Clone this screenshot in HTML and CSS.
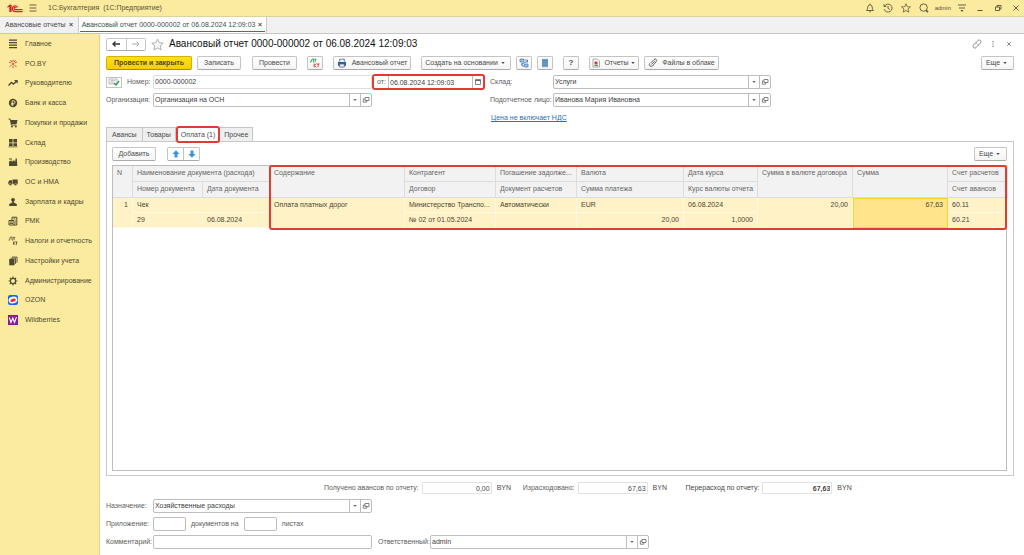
FILE: index.html
```html
<!DOCTYPE html>
<html lang="ru">
<head>
<meta charset="utf-8">
<title>Авансовый отчет 0000-000002 от 06.08.2024 12:09:03</title>
<link rel="stylesheet" href="styles.css">
</head>
<body>
<svg class="defs" aria-hidden="true">
  <symbol id="i-open" viewBox="0 0 8 8"><path d="M3 1.5h4v3H3zM3 3H1.3v3.2h3.4V4.5" fill="none" stroke="currentColor" stroke-width=".8"/></symbol>
  <symbol id="i-down" viewBox="0 0 8 8"><path d="M2.300 3h3.400L4 5z" fill="currentColor"/></symbol>
  <symbol id="i-star" viewBox="0 0 12 12"><path d="M6 .9l1.5 3.5 3.8.3-2.9 2.5.9 3.8L6 9l-3.3 2 .9-3.8L.7 4.7l3.8-.3z" fill="none" stroke="currentColor" stroke-width=".9"/></symbol>
</svg>

<header class="titlebar">
  <svg class="logo" viewBox="0 0 16 9"><g fill="none" stroke="#d8232a" stroke-width="1.2"><path d="M.5 3.2L2.9 1.2V8M4 1v7"/><path d="M10.800 3.300A2.900 2.900 0 1 0 8.300 7.600H15.500"/><path d="M9.400 3.700A1.300 1.300 0 1 0 8.300 5.700H15.500"/></g></svg>
  <button class="plain" aria-label="Меню"><svg class="ic10" viewBox="0 0 10 10"><path d="M1.500 2h7M1.500 5h7M1.500 8h7" stroke="currentColor" stroke-width=".9"/></svg></button>
  <span class="apptitle">1С:Бухгалтерия&nbsp; (1С:Предприятие)</span>
  <div class="tools">
    <button class="plain" aria-label="Уведомления"><svg class="ic10" viewBox="0 0 10 10"><path d="M1.500 7.500C3 6.500 2.500 4 3.200 2.800 3.800 1.500 6.200 1.500 6.800 2.800 7.500 4 7 6.500 8.500 7.500zM4.200 8.800h1.600M5 .6v1" fill="none" stroke="currentColor" stroke-width=".9"/></svg></button>
    <button class="plain" aria-label="История"><svg class="ic10" viewBox="0 0 10 10"><path d="M1.500 3.200A4 4 0 1 1 1.200 6.200M1 1.200v2.300h2.300M5 2.800v2.500l1.800 1.200" fill="none" stroke="currentColor" stroke-width=".9"/></svg></button>
    <button class="plain" aria-label="Избранное"><svg class="ic10"><use href="#i-star"/></svg></button>
    <button class="plain" aria-label="Поиск"><svg class="ic10" viewBox="0 0 10 10"><circle cx="4.600" cy="4.600" r="3.700" fill="none" stroke="currentColor" stroke-width=".9"/><path d="M7 7l2 2.200" stroke="currentColor" stroke-width="1.500"/></svg></button>
    <span class="user">admin</span>
    <button class="plain" aria-label="Настройки"><svg class="ic10" viewBox="0 0 10 10"><path d="M1 2h8M2 5h6" stroke="currentColor" stroke-width=".9"/><path d="M3.500 7h3L5 9z" fill="currentColor"/></svg></button>
    <button class="plain" aria-label="Свернуть"><svg class="ic10" viewBox="0 0 10 10"><path d="M2.500 7.500h5" stroke="currentColor"/></svg></button>
    <button class="plain" aria-label="Развернуть"><svg class="ic10" viewBox="0 0 10 10"><path d="M2.500 4h4v3.500h-4zM4 4V2.500h4V6H6.500" fill="none" stroke="currentColor" stroke-width=".9"/></svg></button>
    <button class="plain" aria-label="Закрыть"><svg class="ic10" viewBox="0 0 10 10"><path d="M2.500 2.500l5 5M7.500 2.500l-5 5" stroke="currentColor" stroke-width=".9"/></svg></button>
  </div>
</header>

<nav class="windows">
  <div class="wtab"><a href="#list">Авансовые отчеты</a><button class="x" aria-label="Закрыть вкладку">×</button></div>
  <div class="wtab current"><a href="#doc">Авансовый отчет 0000-000002 от 06.08.2024 12:09:03</a><button class="x" aria-label="Закрыть вкладку">×</button></div>
</nav>

<div class="workspace">
  <nav class="sidebar">
    <ul>
      <li><a href="#"><svg viewBox="0 0 10 10"><path d="M1 1.200h8M1 3.700h8M1 6.200h8M1 8.700h8" stroke="currentColor" stroke-width="1.300"/></svg>Главное</a></li>
      <li><a href="#"><svg viewBox="0 0 10 10"><path d="M5 .8v2.400M5 6.800v2.400M1 3l2.400 1M6.600 4L9 3M1.500 7.800L3.500 6M6.500 6l2 2M2.500 1l1.400 2M7.500 1L6.100 3" stroke="#e0452c" stroke-width=".9"/><circle cx="5" cy="5" r="1" fill="#e0452c"/></svg>PO.BY</a></li>
      <li><a href="#"><svg viewBox="0 0 10 10"><path d="M.5 7.500L3.500 4.500 5.500 6 8.700 3" fill="none" stroke="currentColor" stroke-width="1.400"/><path d="M6 2h3.700v3.700z" fill="currentColor"/></svg>Руководителю</a></li>
      <li><a href="#"><svg viewBox="0 0 10 10"><circle cx="5" cy="5" r="4.200" fill="currentColor"/><path d="M4.200 8V2.800h1.500a1.300 1.300 0 0 1 0 2.700H3.200M3.200 6.700h2.500" fill="none" stroke="#fbeb9e" stroke-width=".9"/></svg>Банк и касса</a></li>
      <li><a href="#"><svg viewBox="0 0 10 10"><path d="M.5 1h1.700l1.200 6h5.100" fill="none" stroke="currentColor" stroke-width=".9"/><path d="M2.300 2h7.200l-.9 4H3.200z" fill="currentColor"/><circle cx="4" cy="8.500" r="1" fill="currentColor"/><circle cx="7.800" cy="8.500" r="1" fill="currentColor"/></svg>Покупки и продажи</a></li>
      <li><a href="#"><svg viewBox="0 0 10 10"><path d="M1 1h3.600v3.400H1zM5.400 1H9v3.400H5.400zM1 5.200h3.600V8H1zM5.400 5.200H9V8H5.400zM.5 8.500h9v.8h-9z" fill="currentColor"/></svg>Склад</a></li>
      <li><a href="#"><svg viewBox="0 0 10 10"><path d="M1 9V4.500l2.700-1.300v1.500L6.500 3v1.500h.8l.3-3h1.200L9.300 9zM1 1.500h3v1H1z" fill="currentColor"/></svg>Производство</a></li>
      <li><a href="#"><svg viewBox="0 0 10 10"><path d="M4.500 2.500h5.200v4.700H4.500zM.3 7.200V5l1.200-1.800H4v4z" fill="currentColor"/><g fill="currentColor" stroke="#fbeb9e" stroke-width=".4"><circle cx="2.300" cy="7.400" r="1.200"/><circle cx="7.500" cy="7.400" r="1.200"/></g></svg>ОС и НМА</a></li>
      <li><a href="#"><svg viewBox="0 0 10 10"><circle cx="5" cy="2.800" r="1.900" fill="currentColor"/><path d="M4.200 4h1.600v1.600l3 1.400v2H1.200V7l3-1.400z" fill="currentColor"/></svg>Зарплата и кадры</a></li>
      <li><a href="#"><svg viewBox="0 0 10 10"><path d="M1 4.500h5V9H1zM4 4.500V1.200h4.800V9H6" fill="none" stroke="currentColor"/><path d="M2 6h3M2 7.500h3M5.500 2.800h2M7 5h1M7 7h1" stroke="currentColor" stroke-width=".9"/></svg>РМК</a></li>
      <li><a href="#"><svg viewBox="0 0 10 10"><path d="M1 4.500V3.800h.6L2.300 1.200H4v2.600h.5v.7M4.800 1.400h2.400M6 1.400v2.800M5.500 5.500v3.300M7.300 5.500L5.700 7l1.600 1.800M7.500 6h2M8.500 6v2.800" fill="none" stroke="currentColor" stroke-width=".8"/></svg>Налоги и отчетность</a></li>
      <li><a href="#"><svg viewBox="0 0 10 10"><path d="M1.200 3h5.300v6.300H1.200z" fill="currentColor"/><path d="M2.500 2.200h5v5.600M4 1.100h5v5.600" fill="none" stroke="currentColor" stroke-width=".9"/></svg>Настройки учета</a></li>
      <li><a href="#"><svg viewBox="0 0 10 10"><circle cx="5" cy="5" r="2.600" fill="none" stroke="currentColor" stroke-width="1.200"/><path d="M5 .6v1.600M5 7.800v1.600M.6 5h1.600M7.800 5h1.600M1.900 1.900L3 3M7 7l1.100 1.100M8.100 1.900L7 3M3 7L1.900 8.100" stroke="currentColor" stroke-width="1.200"/></svg>Администрирование</a></li>
      <li><a href="#"><svg viewBox="0 0 10 10"><rect width="10" height="10" rx="2" fill="#1268f3"/><ellipse cx="5" cy="5" rx="4.400" ry="3.400" fill="#fff" transform="rotate(-15 5 5)"/><ellipse cx="5" cy="5.200" rx="2.900" ry="1.600" fill="#ee2c3c" transform="rotate(-15 5 5)"/></svg>OZON</a></li>
      <li><a href="#"><svg viewBox="0 0 10 10"><rect width="10" height="10" fill="#8d1a94"/><path d="M1.300 2.500L3 7.500 4.800 3l1.700 4.500L8.500 2" fill="none" stroke="#fff" stroke-width="1.100"/></svg>Wildberries</a></li>
    </ul>
  </nav>

  <main class="doc">
    <div class="heading">
      <div class="group nav">
        <button aria-label="Назад"><svg class="ic10" viewBox="0 0 10 10"><path d="M9 5H2.500M4.500 2.500L2 5l2.500 2.500" fill="none" stroke="#333" stroke-width="1.300"/></svg></button>
        <button aria-label="Вперед"><svg class="ic10" viewBox="0 0 10 10"><path d="M1 5h6.500M5.500 2.500L8 5 5.500 7.500" fill="none" stroke="#aaa"/></svg></button>
      </div>
      <button class="plain fav" aria-label="В избранное"><svg><use href="#i-star"/></svg></button>
      <h1>Авансовый отчет 0000-000002 от 06.08.2024 12:09:03</h1>
      <div class="head-tools">
        <button class="plain" aria-label="Ссылка"><svg class="ic10" viewBox="0 0 10 10"><path d="M4 3.500l1.800-2a1.800 1.800 0 0 1 2.700 2.500L6.700 6H5M6 6.500L4.200 8.500A1.800 1.800 0 0 1 1.500 6L3.300 4H5" fill="none" stroke="currentColor" stroke-width=".8"/></svg></button>
        <button class="plain" aria-label="Действия"><svg class="ic10" viewBox="0 0 10 10"><path d="M4.400 2h1.200v1.200H4.400zM4.400 4.400h1.200v1.200H4.400zM4.400 6.800h1.200V8H4.400z" fill="currentColor"/></svg></button>
        <button class="plain" aria-label="Закрыть"><svg class="ic10" viewBox="0 0 10 10"><path d="M3.200 3.200l3.600 3.600M6.800 3.200L3.200 6.800" stroke="currentColor" stroke-width=".9"/></svg></button>
      </div>
    </div>

    <div class="toolbar">
      <button class="btn primary w86">Провести и закрыть</button>
      <button class="btn w44">Записать</button>
      <button class="btn w45">Провести</button>
      <button class="btn sq" aria-label="Дт Кт"><svg class="ic10" viewBox="0 0 10 10"><path d="M.5 4.500v-.8h.7L2 1h1.400v2.700h.6v.8M4.200 1.200h2.200M5.300 1.200v2.600" fill="none" stroke="#1f9b55" stroke-width=".9"/><path d="M4.200 5.500v3.800M6.200 5.500L4.500 7.300l1.700 2M6.800 6h2.700M8.200 6v3.300" fill="none" stroke="#e0342b" stroke-width=".9"/></svg></button>
      <button class="btn w78"><svg class="ic10" viewBox="0 0 10 10"><path d="M1 3.800h8v4H1z" fill="#35608f"/><path d="M2.700 3.500V1.200h4.600v2.300M2.700 6h4.600v3H2.700z" fill="#fff" stroke="#35608f" stroke-width=".8"/></svg>Авансовый отчет</button>
      <button class="btn w90">Создать на основании<svg class="caret"><use href="#i-down"/></svg></button>
      <button class="btn sq tight" aria-label="Структура подчиненности"><svg class="ic10" viewBox="0 0 10 10"><path d="M1 1h4v3H1zM5.500 6H9v3H5.500z" fill="#9fc0e0" stroke="#4679ac" stroke-width=".7"/><path d="M6 2h2.500v2.500M3 5v3h2M2 6.500l6-3" fill="none" stroke="#4679ac" stroke-width=".9"/></svg></button>
      <button class="btn sq" aria-label="Реестр"><svg class="ic10" viewBox="0 0 10 10"><path d="M2 .8h6v8.400H2z" fill="#7fa8d0"/><path d="M2 2.700h6M2 4.900h6M2 7.100h6" stroke="#35679b" stroke-width=".7"/></svg></button>
      <button class="btn sq help" aria-label="Справка">?</button>
      <button class="btn w49"><svg class="ic10" viewBox="0 0 10 10"><path d="M2 1h4.500L8.500 3v6H2z" fill="#fff" stroke="#888" stroke-width=".7"/><path d="M3.500 3.500h3v3h-3z" fill="#d83a3a"/><path d="M3.500 7.500h3.500" stroke="#488a48"/></svg>Отчеты<svg class="caret"><use href="#i-down"/></svg></button>
      <button class="btn w75"><svg class="ic10" viewBox="0 0 10 10"><path d="M3.500 6.500L7 2.800M2.500 5.200L6 1.500a1.500 1.500 0 0 1 2.300 2L4.500 8A2 2 0 0 1 1.500 5.500" fill="none" stroke="#666"/></svg>Файлы в облаке</button>
      <button class="btn more">Еще<svg class="caret"><use href="#i-down"/></svg></button>
    </div>

    <form class="fields">
      <div class="number"><span class="state"><svg viewBox="0 0 14 8"><path d="M2 1h8v5H2z" fill="#fff" stroke="#999" stroke-width=".7"/><path d="M3.500 2.700h5M3.500 4.300h3" stroke="#999" stroke-width=".7"/><path d="M7 5l2 2 3-4" fill="none" stroke="#2ca05a" stroke-width="1.400"/></svg></span><label for="num">Номер:</label></div>
      <div class="box light"><input id="num" value="0000-000002"></div>
      <div class="datebox marked"><label for="date">от:</label><input id="date" value="06.08.2024 12:09:03"><button type="button" aria-label="Календарь"><svg class="ic8" viewBox="0 0 8 8"><path d="M1.500 2h5v4.500h-5z" fill="none" stroke="currentColor" stroke-width=".8"/><path d="M1.200 1.300h5.600v1.700H1.200z" fill="currentColor"/></svg></button></div>
      <label class="gap" for="store">Склад:</label>
      <div class="box"><input id="store" value="Услуги"><button type="button" aria-label="Выбрать"><svg class="ic8"><use href="#i-down"/></svg></button><button type="button" aria-label="Открыть"><svg class="ic8"><use href="#i-open"/></svg></button></div>
      <label class="first" for="org">Организация:</label>
      <div class="box"><input id="org" value="Организация на ОСН"><button type="button" aria-label="Выбрать"><svg class="ic8"><use href="#i-down"/></svg></button><button type="button" aria-label="Открыть"><svg class="ic8"><use href="#i-open"/></svg></button></div>
      <label class="gap person" for="person">Подотчетное лицо:</label>
      <div class="box"><input id="person" value="Иванова Мария Ивановна"><button type="button" aria-label="Выбрать"><svg class="ic8"><use href="#i-down"/></svg></button><button type="button" aria-label="Открыть"><svg class="ic8"><use href="#i-open"/></svg></button></div>
      <a class="vat" href="#vat">Цена не включает НДС</a>
    </form>

    <div class="tabs" role="tablist">
      <button role="tab">Авансы</button>
      <button role="tab">Товары</button>
      <button role="tab" class="active" aria-selected="true">Оплата (1)</button>
      <button role="tab">Прочее</button>
    </div>

    <section class="panel">
      <div class="panelbar">
        <button class="btn w44">Добавить</button>
        <div class="group move">
          <button aria-label="Вверх"><svg class="ic10" viewBox="0 0 10 10"><path d="M5 1.200L8.600 5H6.500v3.500h-3V5H1.400z" fill="#3b93dc"/></svg></button>
          <button aria-label="Вниз"><svg class="ic10" viewBox="0 0 10 10"><path d="M5 8.800L1.400 5h2.100V1.500h3V5h2.100z" fill="#3b93dc"/></svg></button>
        </div>
        <button class="btn more">Еще<svg class="caret"><use href="#i-down"/></svg></button>
      </div>
      <div class="gridbox">
        <table>
          <colgroup><col class="c20"><col class="c70"><col class="c67"><col class="c135"><col class="c91"><col class="c81"><col class="c107"><col class="c74"><col class="c95"><col class="c95"><col class="c60"></colgroup>
          <thead>
            <tr><th rowspan="2">N</th><th colspan="2">Наименование документа (расхода)</th><th rowspan="2">Содержание</th><th>Контрагент</th><th>Погашение задолже...</th><th>Валюта</th><th>Дата курса</th><th rowspan="2">Сумма в валюте договора</th><th rowspan="2">Сумма</th><th>Счет расчетов</th></tr>
            <tr><th>Номер документа</th><th>Дата документа</th><th>Договор</th><th>Документ расчетов</th><th>Сумма платежа</th><th>Курс валюты отчета</th><th>Счет авансов</th></tr>
          </thead>
          <tbody>
            <tr><td rowspan="2" class="num">1</td><td colspan="2">Чек</td><td rowspan="2">Оплата платных дорог</td><td>Министерство Транспо...</td><td>Автоматически</td><td>EUR</td><td>06.08.2024</td><td rowspan="2" class="num">20,00</td><td rowspan="2" class="num selected">67,63</td><td>60.11</td></tr>
            <tr><td>29</td><td>06.08.2024</td><td>№ 02 от 01.05.2024</td><td></td><td class="num">20,00</td><td class="num">1,0000</td><td>60.21</td></tr>
          </tbody>
        </table>
        <div class="frame"></div>
      </div>
    </section>

    <div class="totals">
      <label for="t1">Получено авансов по отчету:</label><input id="t1" value="0,00" readonly><span>BYN</span>
      <label for="t2">Израсходовано:</label><input id="t2" value="67,63" readonly><span>BYN</span>
      <label for="t3" class="dark">Перерасход по отчету:</label><input id="t3" class="strong" value="67,63" readonly><span>BYN</span>
    </div>

    <form class="footer">
      <label for="purpose">Назначение:</label>
      <div class="box"><input id="purpose" value="Хозяйственные расходы"><button type="button" aria-label="Выбрать"><svg class="ic8"><use href="#i-down"/></svg></button><button type="button" aria-label="Открыть"><svg class="ic8"><use href="#i-open"/></svg></button></div>
      <label class="first" for="docs">Приложение:</label>
      <div class="attach"><div class="box small"><input id="docs"></div><label for="docs">документов на</label><div class="box small"><input id="sheets"></div><label for="sheets">листах</label></div>
      <label class="first" for="comment">Комментарий:</label>
      <div class="box"><input id="comment"></div>
      <label class="resp" for="resp">Ответственный:</label>
      <div class="box"><input id="resp" value="admin"><button type="button" aria-label="Выбрать"><svg class="ic8"><use href="#i-down"/></svg></button><button type="button" aria-label="Открыть"><svg class="ic8"><use href="#i-open"/></svg></button></div>
    </form>
  </main>
</div>
</body>
</html>
```

FILE: styles.css
```css
* { box-sizing: border-box; }
body {
  margin: 0;
  min-height: 100vh;
  display: flex;
  flex-direction: column;
  background: #fff;
  color: #4a4a4a;
  font: 7px/10px "Liberation Sans", Arial, sans-serif;
}
button, input { font: inherit; color: inherit; margin: 0; padding: 0; }
a { color: inherit; text-decoration: none; }
svg { display: block; flex: none; }
label { white-space: nowrap; color: #5c5c5c; }
.defs { width: 0; height: 0; position: absolute; }
.ic10 { width: 10px; height: 10px; }
.ic8 { width: 8px; height: 8px; }
.plain { border: 0; background: none; }

.titlebar {
  height: 17px;
  display: flex;
  align-items: center;
  padding: 0 3px 0 7px;
  background: #fbeb9e;
  border-bottom: 1px solid #ddd29b;
  color: #5a5238;
}
.logo { width: 16px; height: 9px; margin-right: 5px; }
.apptitle { margin-left: 10px; }
.tools { margin-left: auto; display: flex; align-items: center; gap: 8px; }
.user { font-size: 6px; margin: 0 -2px; }

.windows { height: 17px; display: flex; background: #f1f1f1; border-bottom: 1px solid #c6c6c6; }
.wtab { display: flex; align-items: center; gap: 3px; padding: 0 4px 0 5px; border-right: 1px solid #ccc; white-space: nowrap; }
.wtab.current { gap: 2px; padding: 0 3px; background: linear-gradient(#009a4e, #009a4e) center bottom 1px / calc(100% - 2px) 1px no-repeat #fff; }
.x { border: 0; background: none; font-weight: bold; width: 5px; line-height: 10px; }

.workspace { flex: 1; display: flex; }
.sidebar { width: 100px; flex: none; background: #fbeb9e; border-right: 1px solid #ddd29b; color: #4f482f; }
.sidebar ul { list-style: none; margin: 0; padding: 0; height: 296px; display: grid; grid-auto-rows: 1fr; }
.sidebar a { height: 100%; display: flex; align-items: center; gap: 7px; padding-left: 8px; white-space: nowrap; }
.sidebar svg { width: 10px; height: 10px; }

.doc { flex: 1; min-width: 0; display: flex; flex-direction: column; padding: 3px 10px 6px 6px; }
.heading { display: flex; align-items: center; height: 14px; margin-bottom: 5px; }
.heading h1 { margin: 0 0 0 5px; font-size: 10px; line-height: 14px; font-weight: normal; color: #111; }
.fav { margin-left: 5px; color: #aaa; }
.fav svg { width: 13px; height: 13px; }
.head-tools { margin-left: auto; display: flex; gap: 6px; color: #777; }
.group { display: flex; border: 1px solid #c4c4c4; border-bottom-color: #aaa; border-radius: 2px; }
.group button { border: 0; background: #fff; flex: 1; display: flex; align-items: center; justify-content: center; }
.group button + button { border-left: 1px solid #c4c4c4; }
.nav { width: 40px; height: 13px; }

.btn {
  height: 14px;
  display: flex;
  align-items: center;
  justify-content: center;
  border: 1px solid #c4c4c4;
  border-bottom: 1px solid #aaa;
  border-radius: 2px;
  background: linear-gradient(#fff, #f4f4f4);
  white-space: nowrap;
}
.btn .ic10 { margin-right: 5px; }
.caret { width: 8px; height: 8px; margin-left: 1px; }
.toolbar { display: flex; height: 14px; margin-bottom: 5px; }
.toolbar .btn { margin-right: 5px; }
.toolbar .btn.w45, .toolbar .btn.w78, .toolbar .btn.sq { margin-right: 10px; }
.toolbar .btn.w44 { margin-right: 11px; }
.toolbar .btn.tight { margin-right: 5px; }
.btn.primary { background: linear-gradient(#ffe01a, #f5cf00); border-color: #d3b200 #d3b200 #a98f00; font-weight: bold; color: #55470a; }
.w86 { width: 86px; }
.w44 { width: 44px; }
.w45 { width: 45px; }
.w78 { width: 78px; }
.w90 { width: 90px; }
.w49 { width: 50px; }
.w49 .ic10 { margin-right: 3px; }
.w49 .caret { margin-left: 0; }
.w75 { width: 75px; }
.w75 .ic10 { margin-right: 4px; }
.sq { width: 16px; }
.sq .ic10 { margin: 0; }
.help { font-weight: bold; font-size: 8px; }
.more { width: 33px; margin-left: auto; }
.toolbar .btn.more { margin-left: auto; margin-right: 0; }

.fields { display: grid; grid-template-columns: 47px 219fr 113px 68px 218fr 243fr; grid-auto-rows: 14px; row-gap: 4px; align-items: center; }
.number { display: flex; align-items: center; gap: 5px; }
.state { width: 16px; height: 11px; border: 1px solid #c4c4c4; display: flex; align-items: center; }
.state svg { width: 14px; height: 8px; }
.gap { padding-left: 5px; }
.first { grid-column: 1; }
.person { grid-column: 4; }
.vat { grid-column: 4 / span 2; padding-left: 6px; color: #2f6fb5; text-decoration: underline; }

.box { height: 14px; display: flex; min-width: 0; border: 1px solid #bdbdbd; border-radius: 2px; background: #fff; }
.box.light { border-color: #ddd; }
.box input, .datebox input { flex: 1; min-width: 0; width: 0; border: 0; background: none; padding: 0 1px; outline: 0; color: #404040; }
.box button, .datebox button { width: 11px; border: 0; border-left: 1px solid #bdbdbd; background: none; display: flex; align-items: center; justify-content: center; color: #666; }
.datebox { height: 16px; margin: -1px 0; display: flex; align-items: center; }
.datebox label { width: 14px; padding-left: 3px; }
.datebox input, .datebox button { height: 12px; }
.datebox input { border-left: 1px solid #bdbdbd; }
.marked { border: 2px solid #e23b33; border-radius: 3px; }

.tabs { display: flex; height: 15px; padding-top: 1px; margin-top: 1px; }
.tabs button { border: 1px solid #c6c6c6; border-left-width: 0; border-bottom: 0; background: #efefef; padding: 0 4px; height: 14px; }
.tabs button:first-child { border-left-width: 1px; padding: 0 5px; }
.tabs .active { position: relative; z-index: 1; background: #fff; border: 2px solid #e23b33; border-radius: 3px; height: 17px; margin-top: -1px; padding: 0 3px; }

.panel { flex: 1; display: flex; flex-direction: column; border: 1px solid #c9c9c9; padding: 5px 6px 4px 5px; }
.panelbar { display: flex; height: 14px; margin-bottom: 4px; }
.move { width: 33px; margin-left: 11px; }
.gridbox { flex: 1; position: relative; border: 1px solid #bdbdbd; }
.frame { position: absolute; left: calc(100% * 156 / 893); right: -1px; top: -1px; height: 65px; border: 2px solid #e23b33; border-radius: 3px; }
table { width: 100%; table-layout: fixed; border-collapse: separate; border-spacing: 0; }
th, td { text-align: left; vertical-align: top; font-weight: normal; white-space: nowrap; overflow: hidden; text-overflow: ellipsis; line-height: 10px; }
th { height: 16px; padding: 2px 1px 3px 4px; background: #f2f2f2; color: #666; border-right: 1px solid #dcdcdc; border-bottom: 1px solid #dcdcdc; }
td { height: 15px; padding: 2px 1px 2px 4px; background: #fff2c7; color: #4a4434; border-right: 1px solid #fff9e4; border-bottom: 1px solid #fff9e4; }
td.num { text-align: right; padding-right: 4px; }
td.selected { background: #ffe48c; border: 1px solid #fbd32e; padding: 1px 4px 1px 3px; }
.c20 { width: 20px; }
.c70 { width: 70px; }
.c67 { width: 67px; }
.c135 { width: 135px; }
.c91 { width: 91px; }
.c81 { width: 81px; }
.c107 { width: 107px; }
.c74 { width: 74px; }
.c95 { width: 95px; }
.c60 { width: 60px; }

.totals { display: flex; align-items: center; height: 12px; margin: 6px 0 5px 218px; }
.totals input { width: 70px; height: 12px; margin: 0 5px 0 3px; padding: 0 1px; border: 1px solid #e2e2e2; border-radius: 1px; text-align: right; }
.totals span { width: 26px; }
.totals .dark { color: #444; margin-left: 7px; }
.totals .strong { font-weight: bold; }

.footer { display: grid; grid-template-columns: 47px 219fr 58px 219fr 365fr; grid-auto-rows: 14px; row-gap: 4px; align-items: center; }
.attach { grid-column: 2 / span 3; display: flex; align-items: center; gap: 5px; }
.small { width: 33px; }
.resp { padding-left: 6px; }
```
